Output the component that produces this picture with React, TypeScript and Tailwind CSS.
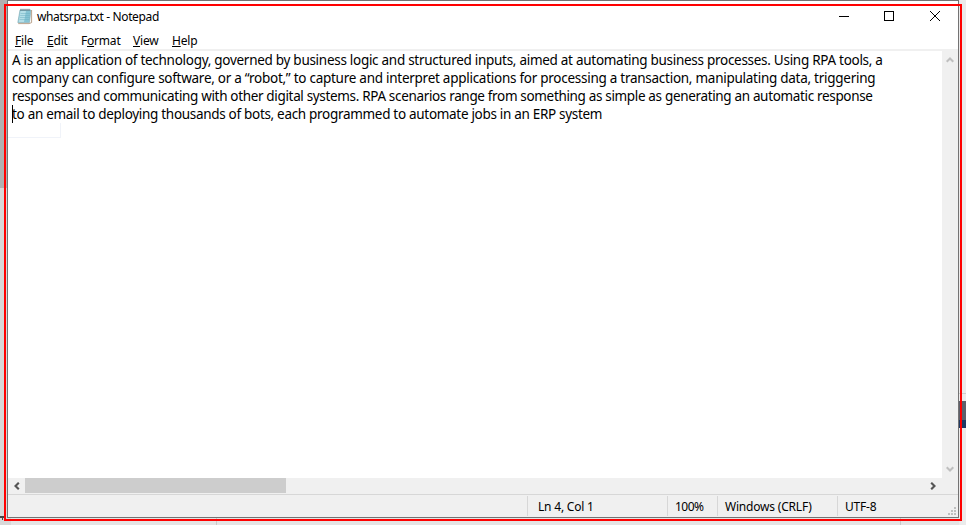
import React from "react";

const lines = [
  { text: "A is an application of technology, governed by business logic and structured inputs, aimed at automating business processes. Using RPA tools, a", cls: "tracking-[-0.282px]" },
  { text: "company can configure software, or a “robot,” to capture and interpret applications for processing a transaction, manipulating data, triggering", cls: "tracking-[-0.266px]" },
  { text: "responses and communicating with other digital systems. RPA scenarios range from something as simple as generating an automatic response", cls: "tracking-[-0.337px]" },
  { text: "to an email to deploying thousands of bots, each programmed to automate jobs in an ERP system", cls: "tracking-[-0.306px]" },
];

const menus = [
  { k: "F", pre: "", post: "ile", w: "w-8" },
  { k: "E", pre: "", post: "dit", w: "w-[34px]" },
  { k: "o", pre: "F", post: "rmat", w: "w-[52px]" },
  { k: "V", pre: "", post: "iew", w: "w-[39px]" },
  { k: "H", pre: "", post: "elp", w: "w-10" },
];

function Arrow({ d, color }: { d: string; color: string }) {
  return (
    <svg width="8" height="8" viewBox="0 0 8 8" fill="none" stroke={color} strokeWidth="2.1">
      <path d={d} />
    </svg>
  );
}

function NotepadIcon() {
  return (
    <svg width="16" height="17" viewBox="0 0 16 17" className="shrink-0">
      <path d="M3 2H14L12.5 14.5H0.8Z" fill="#86c4d4" stroke="#7fa9b3" strokeWidth="0.6" />
      <path d="M3.5 3H9L7 14H1.6Z" fill="#b5dfe8" />
      <path d="M3.5 5.5H13M3.2 7.5H12.8M2.9 9.5H12.6M2.6 11.5H12.4" stroke="#6db1c2" strokeWidth="0.5" />
      <path d="M14.6 2L14.6 14.6L12 15.6H1.2" fill="none" stroke="#a88c70" strokeWidth="0.8" />
      <path d="M4 0.8V2.8M6 0.8V2.8M8 0.8V2.8M10 0.8V2.8M12 0.8V2.8" stroke="#505f64" strokeWidth="0.9" />
    </svg>
  );
}

export default function App() {
  return (
    <div className="relative h-[525px] w-[966px] overflow-hidden bg-[#e4e4e4] font-['Noto_Sans','Open_Sans',sans-serif] text-black">
      <div className="absolute left-0 top-0 h-[188px] w-2 bg-[#b0b0b0]" />
      <div className="absolute left-0 top-[188px] h-[337px] w-[11px] bg-[#d8d8d8]" />
      <div className="absolute left-[959px] top-0 h-full w-[7px] bg-[#ebebeb]" />
      <div className="absolute left-[959px] top-[393px] h-px w-[7px] bg-[#cdcdcd]" />
      <div className="absolute left-[958px] top-[401px] h-[19px] w-2 bg-[#5d606b]" />
      <div className="absolute left-[958px] top-[420px] h-2 w-2 bg-[#203a64]" />
      <div className="absolute left-[216px] top-[518px] h-[7px] w-px bg-[#c9c9c9]" />
      <div className="absolute left-[900px] top-[518px] h-[7px] w-px bg-[#c9c9c9]" />
      <svg className="absolute left-0 top-[516px]" width="5" height="4"><path d="M0 0H5V2H3V4H2V2H0Z" fill="#444" /></svg>

      <div className="relative ml-[7px] flex h-[518px] w-[952px] flex-col border border-[#737373] bg-white">
        <div className="flex h-[30px] shrink-0 items-center pl-[9px]">
          <NotepadIcon />
          <span className="ml-1 whitespace-nowrap pt-px text-[12px] leading-4 tracking-[-0.37px]">whatsrpa.txt - Notepad</span>
          <svg className="ml-auto mr-[17px]" width="103" height="12" viewBox="0 0 103 12" fill="none" stroke="#000" shapeRendering="crispEdges">
            <path d="M1 6.5H11" />
            <rect x="46.5" y="1.5" width="9" height="9" />
            <path d="M92 1L102 11M102 1L92 11" shapeRendering="auto" />
          </svg>
        </div>
        <div className="flex h-[18px] shrink-0 items-center pl-[7px] pt-[2px] text-[12px] leading-4 tracking-[-0.2px]">
          {menus.map((m) => (
            <span key={m.k} className={m.w + " whitespace-nowrap"}>
              {m.pre}<span className="underline decoration-1 underline-offset-1">{m.k}</span>{m.post}
            </span>
          ))}
        </div>
        <div className="h-[2px] shrink-0 bg-[#f0f0f0]" />
        <div className="flex h-[427px] shrink-0">
          <div className="relative flex-1 pl-1">
            {lines.map((l) => (
              <div key={l.text} className="h-[18px] whitespace-nowrap text-[13.5px] leading-[18px]">
                <span className={l.cls}>{l.text}</span>
              </div>
            ))}
            <div className="absolute left-1 top-[54px] h-[18px] w-px bg-black" />
            <div className="absolute left-0 top-[72px] h-[15px] w-[53px] border-b border-r border-[#f0f3f9]" />
          </div>
          <div className="flex w-4 flex-col items-center justify-between bg-[#f0f0f0] pb-[5px] pt-[5px]">
            <Arrow d="M0.7 5.8L4 2.5L7.3 5.8" color="#bfbfbf" />
            <Arrow d="M0.7 2.2L4 5.5L7.3 2.2" color="#bfbfbf" />
          </div>
        </div>
        <div className="flex h-4 shrink-0 items-center bg-[#f0f0f0]">
          <div className="flex w-[17px] justify-center pb-px"><Arrow d="M5.8 0.7L2.5 4L5.8 7.3" color="#555" /></div>
          <div className="h-[15px] w-[261px] self-start bg-[#cdcdcd]" />
          <div className="ml-auto mr-[21px] pb-px"><Arrow d="M2.2 0.7L5.5 4L2.2 7.3" color="#555" /></div>
        </div>
        <div className="relative flex flex-1 border-t border-[#d7d7d7] bg-[#f0f0f0] pl-[519px] pt-px text-[12px] leading-[21px]">
          <div className="h-5 w-[140px] border-l border-[#d7d7d7] pl-[10px]"><span className="tracking-[-0.2px]">Ln 4, Col 1</span></div>
          <div className="h-5 w-[50px] border-l border-[#d7d7d7] pl-[7px]"><span className="tracking-[-0.5px]">100%</span></div>
          <div className="h-5 w-[120px] border-l border-[#d7d7d7] pl-[7px]"><span className="tracking-[-0.2px]">Windows (CRLF)</span></div>
          <div className="h-5 border-l border-[#d7d7d7] pl-[7px]"><span className="tracking-[-0.2px]">UTF-8</span></div>
          <svg className="absolute bottom-[2px] right-[2px]" width="8" height="8" fill="#bfbfbf">
            <path d="M6 0h2v2h-2zM3 3h2v2h-2zM6 3h2v2h-2zM0 6h2v2h-2zM3 6h2v2h-2zM6 6h2v2h-2z" />
          </svg>
        </div>
      </div>
      <div className="absolute left-1 top-1 h-[517px] w-[958px] border-2 border-[#ff0000]" />
    </div>
  );
}
